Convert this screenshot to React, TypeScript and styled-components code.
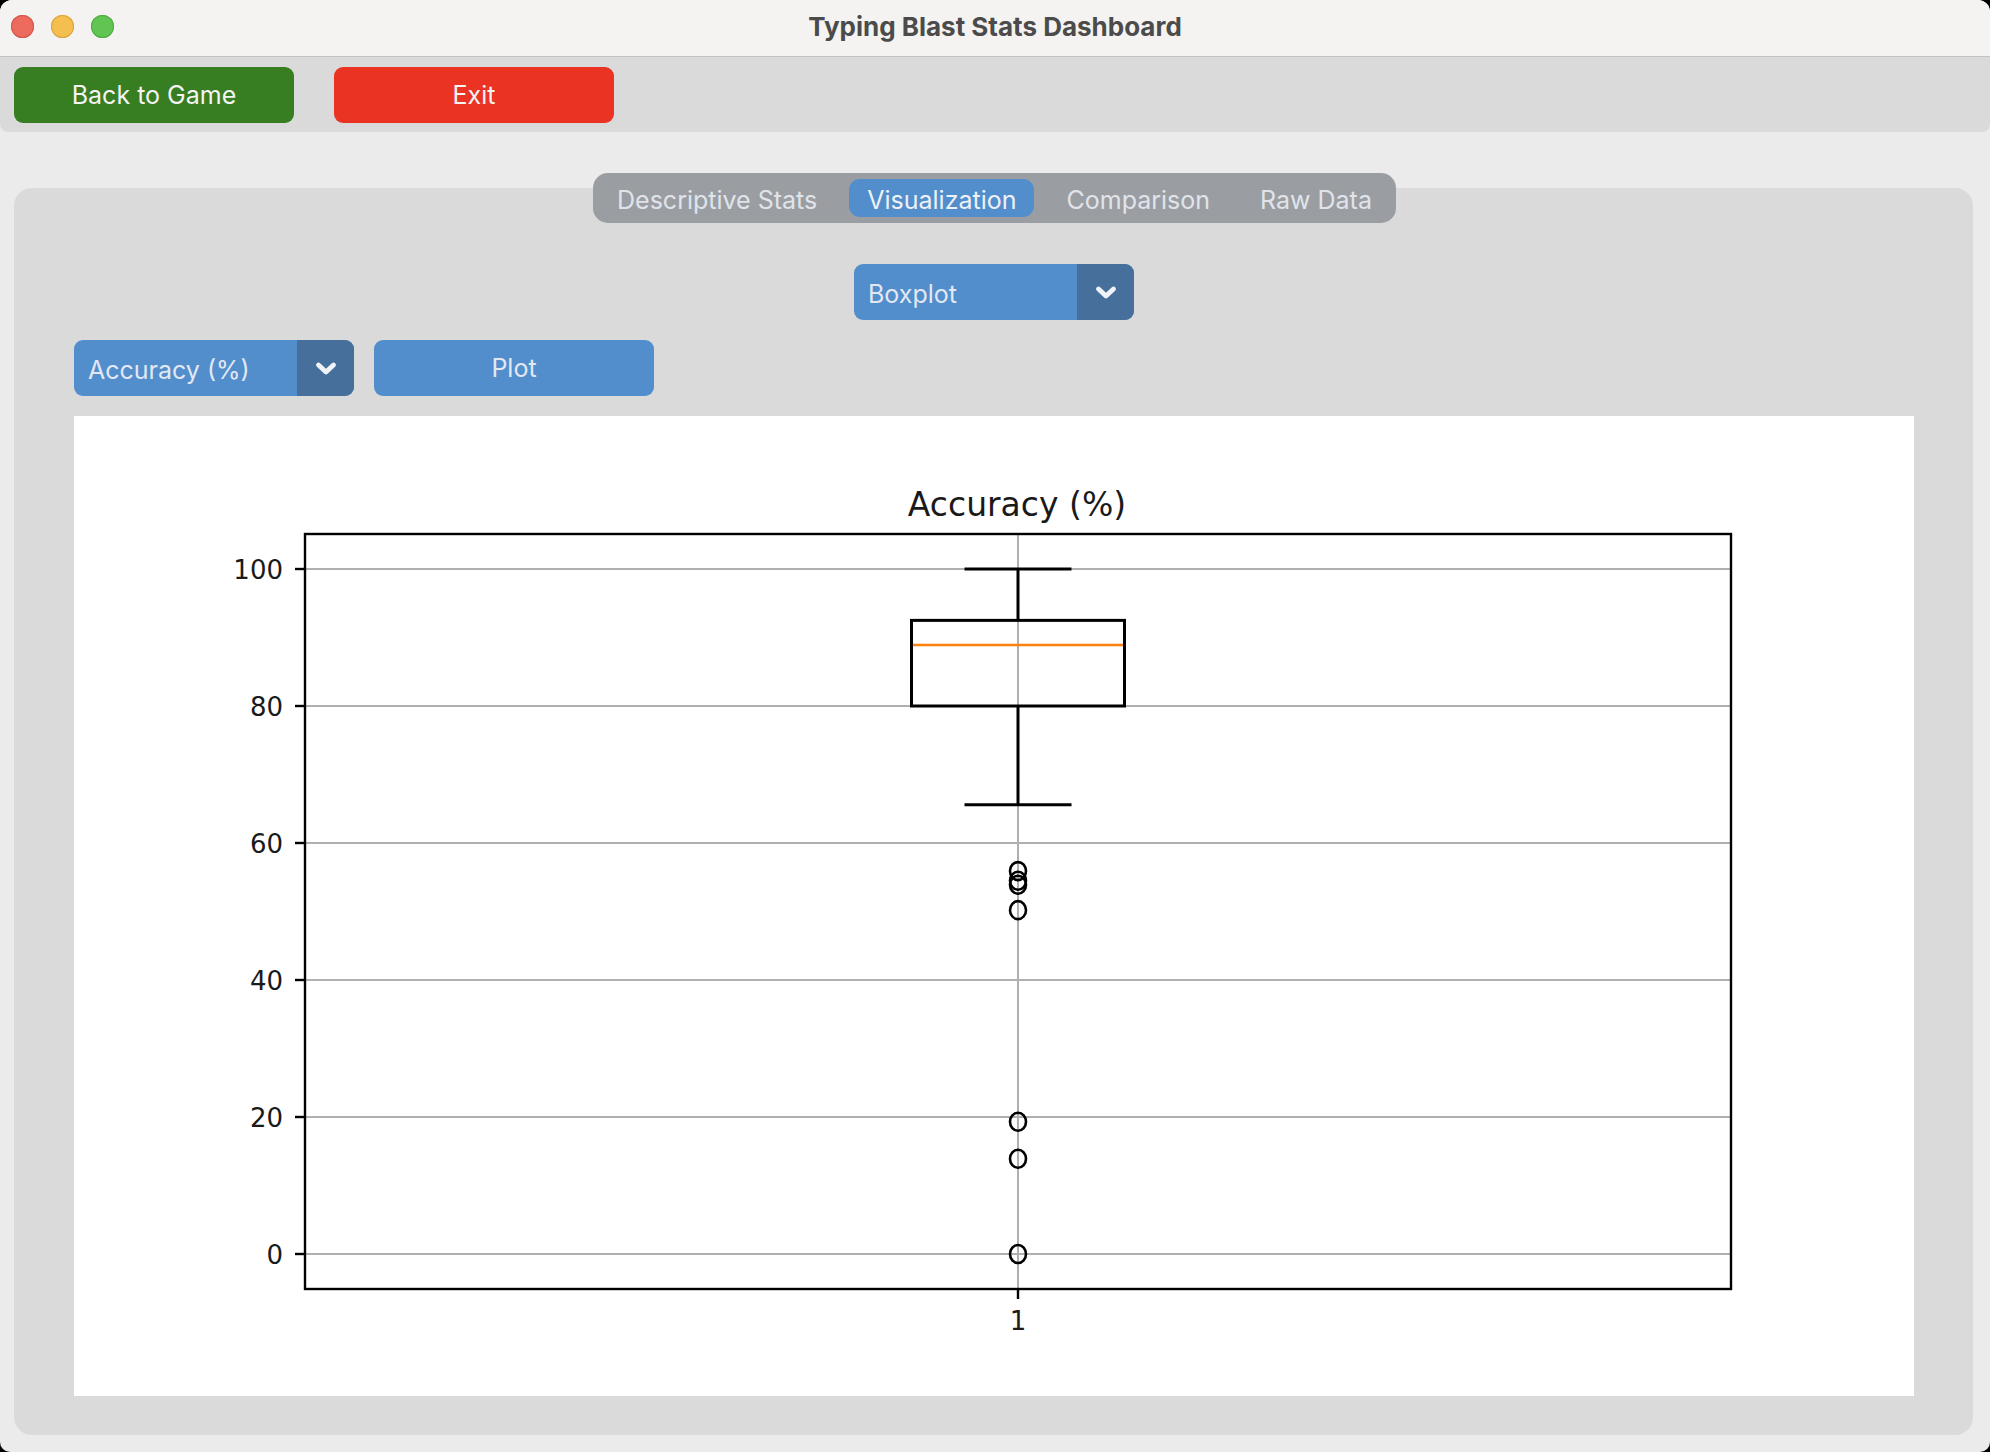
import React from 'react';
import styled, { createGlobalStyle } from 'styled-components';

const Global = createGlobalStyle`
  html, body { margin: 0; padding: 0; background: #000; }
  body {
    width: 1990px;
    height: 1452px;
    overflow: hidden;
    font-family: Inter, "Noto Sans", "Liberation Sans", sans-serif;
    -webkit-font-smoothing: antialiased;
  }
  #root { width: 1990px; height: 1452px; }
`;

const Window = styled.div`
  width: 1990px;
  height: 1452px;
  background: #ebebeb;
  border-radius: 12px 12px 10px 10px;
  overflow: hidden;
  display: flex;
  flex-direction: column;
`;

const TitleBar = styled.div`
  flex: 0 0 57px;
  box-sizing: border-box;
  background: #f4f3f1;
  border-bottom: 1px solid #c2c2c2;
  display: grid;
  grid-template-columns: 1fr auto 1fr;
  align-items: center;
`;

const Lights = styled.div`
  display: flex;
  gap: 17px;
  padding-left: 11px;
  padding-bottom: 3px;
`;

const Light = styled.span<{ $c: string; $b: string }>`
  width: 23px;
  height: 23px;
  border-radius: 50%;
  background: ${p => p.$c};
  box-shadow: inset 0 0 0 1px ${p => p.$b};
`;

const Title = styled.div`
  font-size: 26px;
  font-weight: 700;
  color: #4b4b4b;
  padding-bottom: 3px;
`;

const Toolbar = styled.div`
  flex: 0 0 75px;
  background: #dadada;
  border-radius: 0 0 8px 8px;
  display: flex;
  align-items: center;
  gap: 40px;
  padding: 0 14px;
`;

const ActionButton = styled.button<{ $bg: string }>`
  width: 280px;
  height: 56px;
  border: none;
  border-radius: 9px;
  background: ${p => p.$bg};
  color: #f4f4f4;
  font-family: inherit;
  font-size: 25px;
  font-weight: 400;
  padding: 0;
  margin-top: 1px;
`;

const Content = styled.div`
  flex: 1;
  display: flex;
  flex-direction: column;
  align-items: stretch;
  padding: 41px 17px 17px 14px;
  min-height: 0;
`;

const TabBar = styled.div`
  position: relative;
  z-index: 1;
  align-self: center;
  height: 50px;
  box-sizing: border-box;
  background: #9a9ea3;
  border-radius: 15px;
  padding: 6px;
  display: flex;
  gap: 14px;
  margin-left: 2px;
`;

const Tab = styled.div<{ $active?: boolean }>`
  height: 38px;
  box-sizing: border-box;
  display: flex;
  align-items: center;
  padding: 3px 18px 0;
  border-radius: 11px;
  background: ${p => (p.$active ? '#528dcc' : 'transparent')};
  color: ${p => (p.$active ? '#edf1f7' : '#e0e4ea')};
  font-size: 25px;
`;

const Panel = styled.div`
  flex: 1;
  margin-top: -35px;
  background: #dadada;
  border-radius: 18px;
  padding: 76px 59px 39px 60px;
  display: flex;
  flex-direction: column;
  gap: 20px;
  min-height: 0;
`;

const Row = styled.div<{ $center?: boolean }>`
  display: flex;
  gap: 20px;
  justify-content: ${p => (p.$center ? 'center' : 'flex-start')};
`;

const Dropdown = styled.div`
  width: 280px;
  height: 56px;
  border-radius: 9px;
  overflow: hidden;
  background: #528dcc;
  display: flex;
`;

const DropLabel = styled.div`
  flex: 1;
  display: flex;
  align-items: center;
  padding-left: 14px;
  padding-top: 4px;
  color: #e2e8f2;
  font-size: 25px;
`;

const DropArrow = styled.div`
  width: 57px;
  background: #46709b;
  display: flex;
  align-items: center;
  justify-content: center;
`;

const PlotButton = styled.button`
  width: 280px;
  height: 56px;
  border: none;
  border-radius: 9px;
  background: #528dcc;
  color: #e2e8f2;
  font-family: inherit;
  font-size: 25px;
  padding: 0;
`;

const ChartArea = styled.div`
  flex: 1;
  background: #ffffff;
  min-height: 0;
`;

const Chevron = () => (
  <svg width="24" height="15" viewBox="0 0 24 15">
    <polyline
      points="4.5,4 12,11 19.5,4"
      fill="none"
      stroke="#f0f3f8"
      strokeWidth="4.8"
      strokeLinecap="round"
      strokeLinejoin="round"
    />
  </svg>
);

const Select: React.FC<{ label: string }> = ({ label }) => (
  <Dropdown>
    <DropLabel>{label}</DropLabel>
    <DropArrow>
      <Chevron />
    </DropArrow>
  </Dropdown>
);

// chart geometry (px inside the white area)
const AX_L = 231;
const AX_R = 1657;
const AX_T = 118;
const AX_B = 873;
const CX = 944;
const yOf = (v: number) => 838 - 6.85 * v;

const ticks = [0, 20, 40, 60, 80, 100];
const outliers = [55.9, 54.5, 53.9, 50.2, 19.3, 13.9, 0];

const BoxChart = () => {
  const q1 = yOf(80);
  const q3 = yOf(92.5);
  const med = yOf(88.9);
  const wTop = yOf(100);
  const wBot = yOf(65.6);
  const tickFont = '"DejaVu Sans", "Liberation Sans", sans-serif';
  return (
    <svg width="1840" height="980" viewBox="0 0 1840 980">
      {ticks.map(t => (
        <line key={t} x1={AX_L} x2={AX_R} y1={yOf(t)} y2={yOf(t)} stroke="#b0b0b0" strokeWidth="2" />
      ))}
      <line x1={CX} x2={CX} y1={AX_T} y2={AX_B} stroke="#b0b0b0" strokeWidth="2" />
      <line x1={CX} x2={CX} y1={wTop} y2={q3} stroke="#000" strokeWidth="3" />
      <line x1={CX} x2={CX} y1={q1} y2={wBot} stroke="#000" strokeWidth="3" />
      <line x1={CX - 53.5} x2={CX + 53.5} y1={wTop} y2={wTop} stroke="#000" strokeWidth="3" />
      <line x1={CX - 53.5} x2={CX + 53.5} y1={wBot} y2={wBot} stroke="#000" strokeWidth="3" />
      <rect x={CX - 106.5} y={q3} width={213} height={q1 - q3} fill="none" stroke="#000" strokeWidth="3" />
      <line x1={CX - 105} x2={CX + 105} y1={med} y2={med} stroke="#ff7f0e" strokeWidth="2.5" />
      {outliers.map((o, i) => (
        <ellipse key={i} cx={CX} cy={yOf(o)} rx="8" ry="9" fill="none" stroke="#000" strokeWidth="2.6" />
      ))}
      <rect x={AX_L} y={AX_T} width={AX_R - AX_L} height={AX_B - AX_T} fill="none" stroke="#000" strokeWidth="2.4" />
      {ticks.map(t => (
        <g key={t}>
          <line x1={AX_L - 10} x2={AX_L} y1={yOf(t)} y2={yOf(t)} stroke="#000" strokeWidth="2.4" />
          <text
            x={AX_L - 22}
            y={yOf(t) + 9.5}
            textAnchor="end"
            fontFamily={tickFont}
            fontSize="26"
            fill="#1a1a1a"
          >
            {t}
          </text>
        </g>
      ))}
      <line x1={CX} x2={CX} y1={AX_B} y2={AX_B + 10} stroke="#000" strokeWidth="2.4" />
      <text x={CX} y={914} textAnchor="middle" fontFamily={tickFont} fontSize="26" fill="#1a1a1a">
        1
      </text>
      <text x={943} y={100} textAnchor="middle" fontFamily={tickFont} fontSize="33" fill="#1a1a1a">
        Accuracy (%)
      </text>
    </svg>
  );
};

export default function App() {
  return (
    <>
      <Global />
      <Window>
        <TitleBar>
          <Lights>
            <Light $c="#ed6a5e" $b="#d5574c" />
            <Light $c="#f5bf4f" $b="#d9a53f" />
            <Light $c="#61c554" $b="#4fad43" />
          </Lights>
          <Title>Typing Blast Stats Dashboard</Title>
          <div />
        </TitleBar>
        <Toolbar>
          <ActionButton $bg="#377e22">Back to Game</ActionButton>
          <ActionButton $bg="#ea3323">Exit</ActionButton>
        </Toolbar>
        <Content>
          <TabBar>
            <Tab>Descriptive Stats</Tab>
            <Tab $active>Visualization</Tab>
            <Tab>Comparison</Tab>
            <Tab>Raw Data</Tab>
          </TabBar>
          <Panel>
            <Row $center>
              <Select label="Boxplot" />
            </Row>
            <Row>
              <Select label="Accuracy (%)" />
              <PlotButton>Plot</PlotButton>
            </Row>
            <ChartArea>
              <BoxChart />
            </ChartArea>
          </Panel>
        </Content>
      </Window>
    </>
  );
}
